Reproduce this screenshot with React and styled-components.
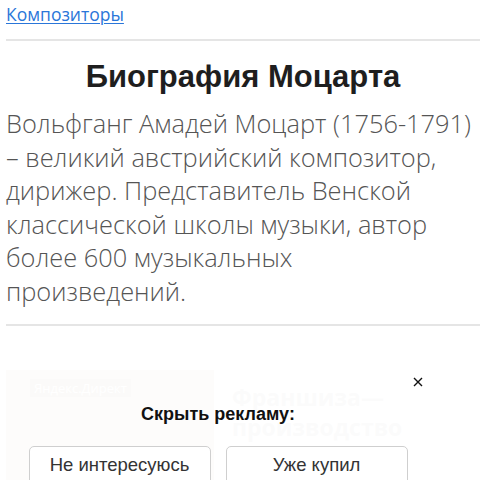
import React from "react";
import styled, { createGlobalStyle } from "styled-components";

const GlobalStyle = createGlobalStyle`
  html, body {
    margin: 0;
    padding: 0;
    background: #fff;
    overflow: hidden;
  }
`;

const Page = styled.div`
  width: 474px;
  padding-left: 6px;
  font-family: "Open Sans", "Liberation Sans", sans-serif;
`;

const Crumbs = styled.div`
  padding-top: 2px;
  height: 41px;
  border-bottom: 2px solid #e5e5e5;
  box-sizing: border-box;
`;

const CrumbLink = styled.a`
  font-size: 17.5px;
  line-height: 24px;
  color: #2a76d9;
  text-decoration: underline;
  text-decoration-thickness: 1px;
  text-underline-offset: 2px;
`;

const Title = styled.h1`
  margin: 16px 0 10px;
  font-family: "Liberation Sans", Arial, sans-serif;
  font-weight: 700;
  font-size: 31px;
  line-height: 40px;
  color: #1e1e1e;
  text-align: center;
`;

const Lead = styled.p`
  margin: 0;
  padding: 0 8px 16px 0;
  font-size: 25.4px;
  font-weight: 300;
  line-height: 33.5px;
  color: #555;
  border-bottom: 2px solid #e5e5e5;
`;

const AdBlock = styled.div`
  position: relative;
  margin-top: 44px;
  width: 424px;
  height: 120px;
  display: flex;
  gap: 18px;
`;

const AdImage = styled.div`
  width: 208px;
  height: 120px;
  background: #faf8f5;
  padding: 6px 0 0 24px;
  box-sizing: border-box;
`;

const AdLabel = styled.span`
  display: inline-block;
  padding: 0 4px;
  font-size: 13px;
  color: #fff;
  background: #f6f3ef;
`;

const AdHeadline = styled.div`
  padding-top: 12px;
  font-family: "Open Sans", sans-serif;
  font-weight: 700;
  font-size: 23px;
  line-height: 30px;
  color: #f5f5f5;
`;

const Overlay = styled.div`
  position: absolute;
  inset: 0;
  background: rgba(255, 255, 255, 0.6);
  display: flex;
  flex-direction: column;
  align-items: center;
  font-family: "Liberation Sans", Arial, sans-serif;
`;

const Close = styled.button`
  position: absolute;
  top: 5px;
  right: 5px;
  width: 14px;
  height: 14px;
  padding: 0;
  border: 0;
  background: none;
  display: flex;
  align-items: center;
  justify-content: center;
`;

const Question = styled.div`
  margin-top: 33px;
  font-weight: 700;
  font-size: 18px;
  line-height: 22px;
  color: #111;
`;

const Choices = styled.div`
  margin-top: 21px;
  display: flex;
  gap: 15px;
`;

const Choice = styled.button`
  width: 182px;
  height: 44px;
  border: 1px solid #cfcfcf;
  border-radius: 5px;
  background: #fff;
  font-family: "Liberation Sans", Arial, sans-serif;
  font-size: 18.5px;
  line-height: 22px;
  color: #333;
  padding: 7px 0 0;
  display: flex;
  align-items: flex-start;
  justify-content: center;
`;

export default function App() {
  return (
    <>
      <GlobalStyle />
      <Page>
        <Crumbs>
          <CrumbLink href="#">Композиторы</CrumbLink>
        </Crumbs>
        <Title>Биография Моцарта</Title>
        <Lead>
          Вольфганг Амадей Моцарт (1756-1791) – великий австрийский композитор,
          дирижер. Представитель Венской классической школы музыки, автор
          более 600 музыкальных произведений.
        </Lead>
        <AdBlock>
          <AdImage>
            <AdLabel>Яндекс.Директ</AdLabel>
          </AdImage>
          <AdHeadline>
            Франшиза—
            <br />
            производство
          </AdHeadline>
          <Overlay>
            <Close aria-label="Закрыть">
              <svg width="10" height="10" viewBox="0 0 10 10">
                <path d="M1 1L9 9M9 1L1 9" stroke="#111" strokeWidth="1.4" />
              </svg>
            </Close>
            <Question>Скрыть рекламу:</Question>
            <Choices>
              <Choice>Не интересуюсь</Choice>
              <Choice>Уже купил</Choice>
            </Choices>
          </Overlay>
        </AdBlock>
      </Page>
    </>
  );
}
